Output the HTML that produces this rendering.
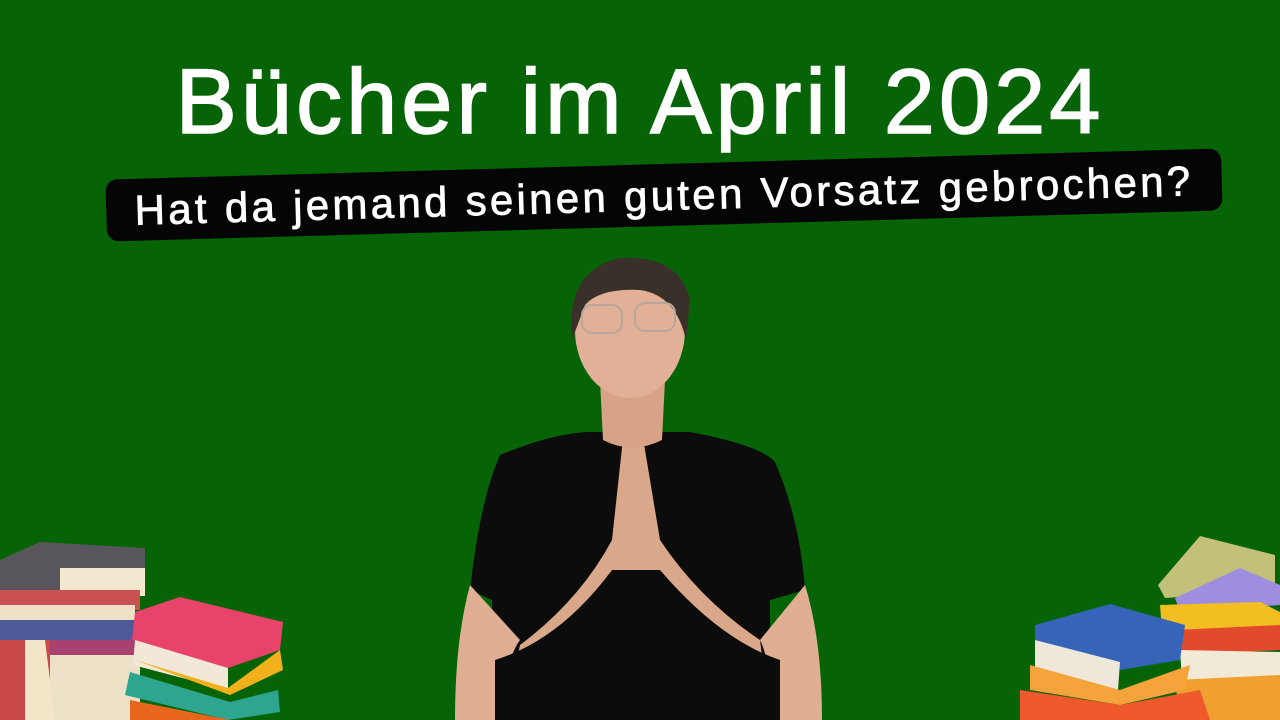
<!DOCTYPE html>
<html><head><meta charset="utf-8"><style>
html,body{margin:0;padding:0}
body{width:1280px;height:720px;background:#066406;position:relative;overflow:hidden;font-family:"Liberation Sans",sans-serif}
.t{position:absolute;left:0;width:1280px;top:52px;text-align:center;color:#fff;font-size:92px;letter-spacing:4px;line-height:100px;-webkit-text-stroke:1.5px #fff}
.b{position:absolute;left:106px;top:164px;width:1116px;height:62px;background:#050505;border-radius:12px;transform:rotate(-1.6deg);color:#fff;font-size:42px;line-height:64px;text-align:center;letter-spacing:3.3px;-webkit-text-stroke:0.8px #fff}
svg{position:absolute;left:0;top:0}
</style></head><body>
<div class="t">Bücher im April 2024</div>
<div class="b">Hat da jemand seinen guten Vorsatz gebrochen?</div>
<svg width="1280" height="720">
<path d="M500 455 Q560 430 600 432 L690 432 Q760 445 775 462 Q800 520 805 590 L770 600 L770 720 L495 720 L492 600 L470 590 Q480 500 500 455Z" fill="#0c0c0c"/>
<path d="M470 585 Q455 640 455 720 L500 720 Q505 660 520 640Z" fill="#e0ae92"/>
<path d="M805 585 Q822 640 822 720 L775 720 Q770 660 760 640Z" fill="#e0ae92"/>
<path d="M520 645 Q580 600 612 540 L625 420 L640 420 L660 540 Q700 600 760 640 L770 720 L505 720Z" fill="#d9a78a"/>
<path d="M495 660 Q560 640 612 570 L660 570 Q720 640 780 660 L780 720 L495 720Z" fill="#0c0c0c"/>
<path d="M600 380 L665 380 L662 440 Q632 455 603 440Z" fill="#d7a286"/>
<ellipse cx="630" cy="330" rx="55" ry="68" fill="#e2b096"/>
<path d="M572 340 Q565 270 620 258 Q680 255 690 300 L686 340 Q676 295 640 290 Q600 288 585 305 Z" fill="#3a302a"/>
<rect x="582" y="305" width="40" height="28" rx="10" fill="none" stroke="#b7a79a" stroke-width="2"/>
<rect x="635" y="303" width="40" height="28" rx="10" fill="none" stroke="#b7a79a" stroke-width="2"/>
<path d="M0 560 L40 542 L145 548 L145 578 L40 598 L0 590Z" fill="#58565c"/>
<rect x="60" y="568" width="85" height="28" fill="#f1e8cf"/>
<rect x="0" y="590" width="140" height="20" fill="#c9514f"/>
<rect x="0" y="605" width="135" height="20" fill="#ece1c6"/>
<rect x="0" y="620" width="135" height="22" fill="#4e5a98"/>
<rect x="0" y="640" width="135" height="25" fill="#a84070"/>
<rect x="50" y="655" width="90" height="65" fill="#ece1c6"/>
<rect x="0" y="640" width="50" height="80" fill="#c94848"/>
<path d="M25 640 L45 640 L55 720 L25 720Z" fill="#f3e6c8"/>
<path d="M135 612 L180 597 L283 622 L280 650 L228 668 L132 640Z" fill="#e8436a"/>
<path d="M135 640 L228 668 L228 690 L133 665Z" fill="#f1e8d8"/>
<path d="M135 660 L230 695 L283 670 L280 650 L228 688Z" fill="#f2b01a"/>
<path d="M130 672 L230 702 L278 690 L280 712 L228 720 L125 695Z" fill="#2ea58f"/>
<path d="M130 700 L230 720 L130 720Z" fill="#e8651e"/>
<path d="M1158 585 L1200 536 L1275 555 L1275 590 L1165 598Z" fill="#c3c07a"/>
<path d="M1175 598 L1240 568 L1280 585 L1280 605 L1180 612Z" fill="#9f8ee0"/>
<path d="M1160 605 L1260 602 L1280 612 L1280 628 L1162 630Z" fill="#f2be20"/>
<path d="M1175 630 L1280 625 L1280 650 L1180 655Z" fill="#e24a2e"/>
<path d="M1180 650 L1280 652 L1280 680 L1182 680Z" fill="#f1ead6"/>
<path d="M1175 680 L1280 675 L1280 720 L1180 720Z" fill="#f0a030"/>
<path d="M1035 625 L1110 604 L1185 625 L1180 660 L1120 670 L1035 655Z" fill="#3564b8"/>
<path d="M1035 640 L1120 662 L1118 690 L1035 668Z" fill="#eee8da"/>
<path d="M1030 665 L1120 690 L1190 665 L1185 690 L1120 705 L1030 690Z" fill="#f5a43c"/>
<path d="M1020 690 L1120 705 L1200 690 L1210 720 L1020 720Z" fill="#ee5a2c"/>
</svg>
</body></html>
